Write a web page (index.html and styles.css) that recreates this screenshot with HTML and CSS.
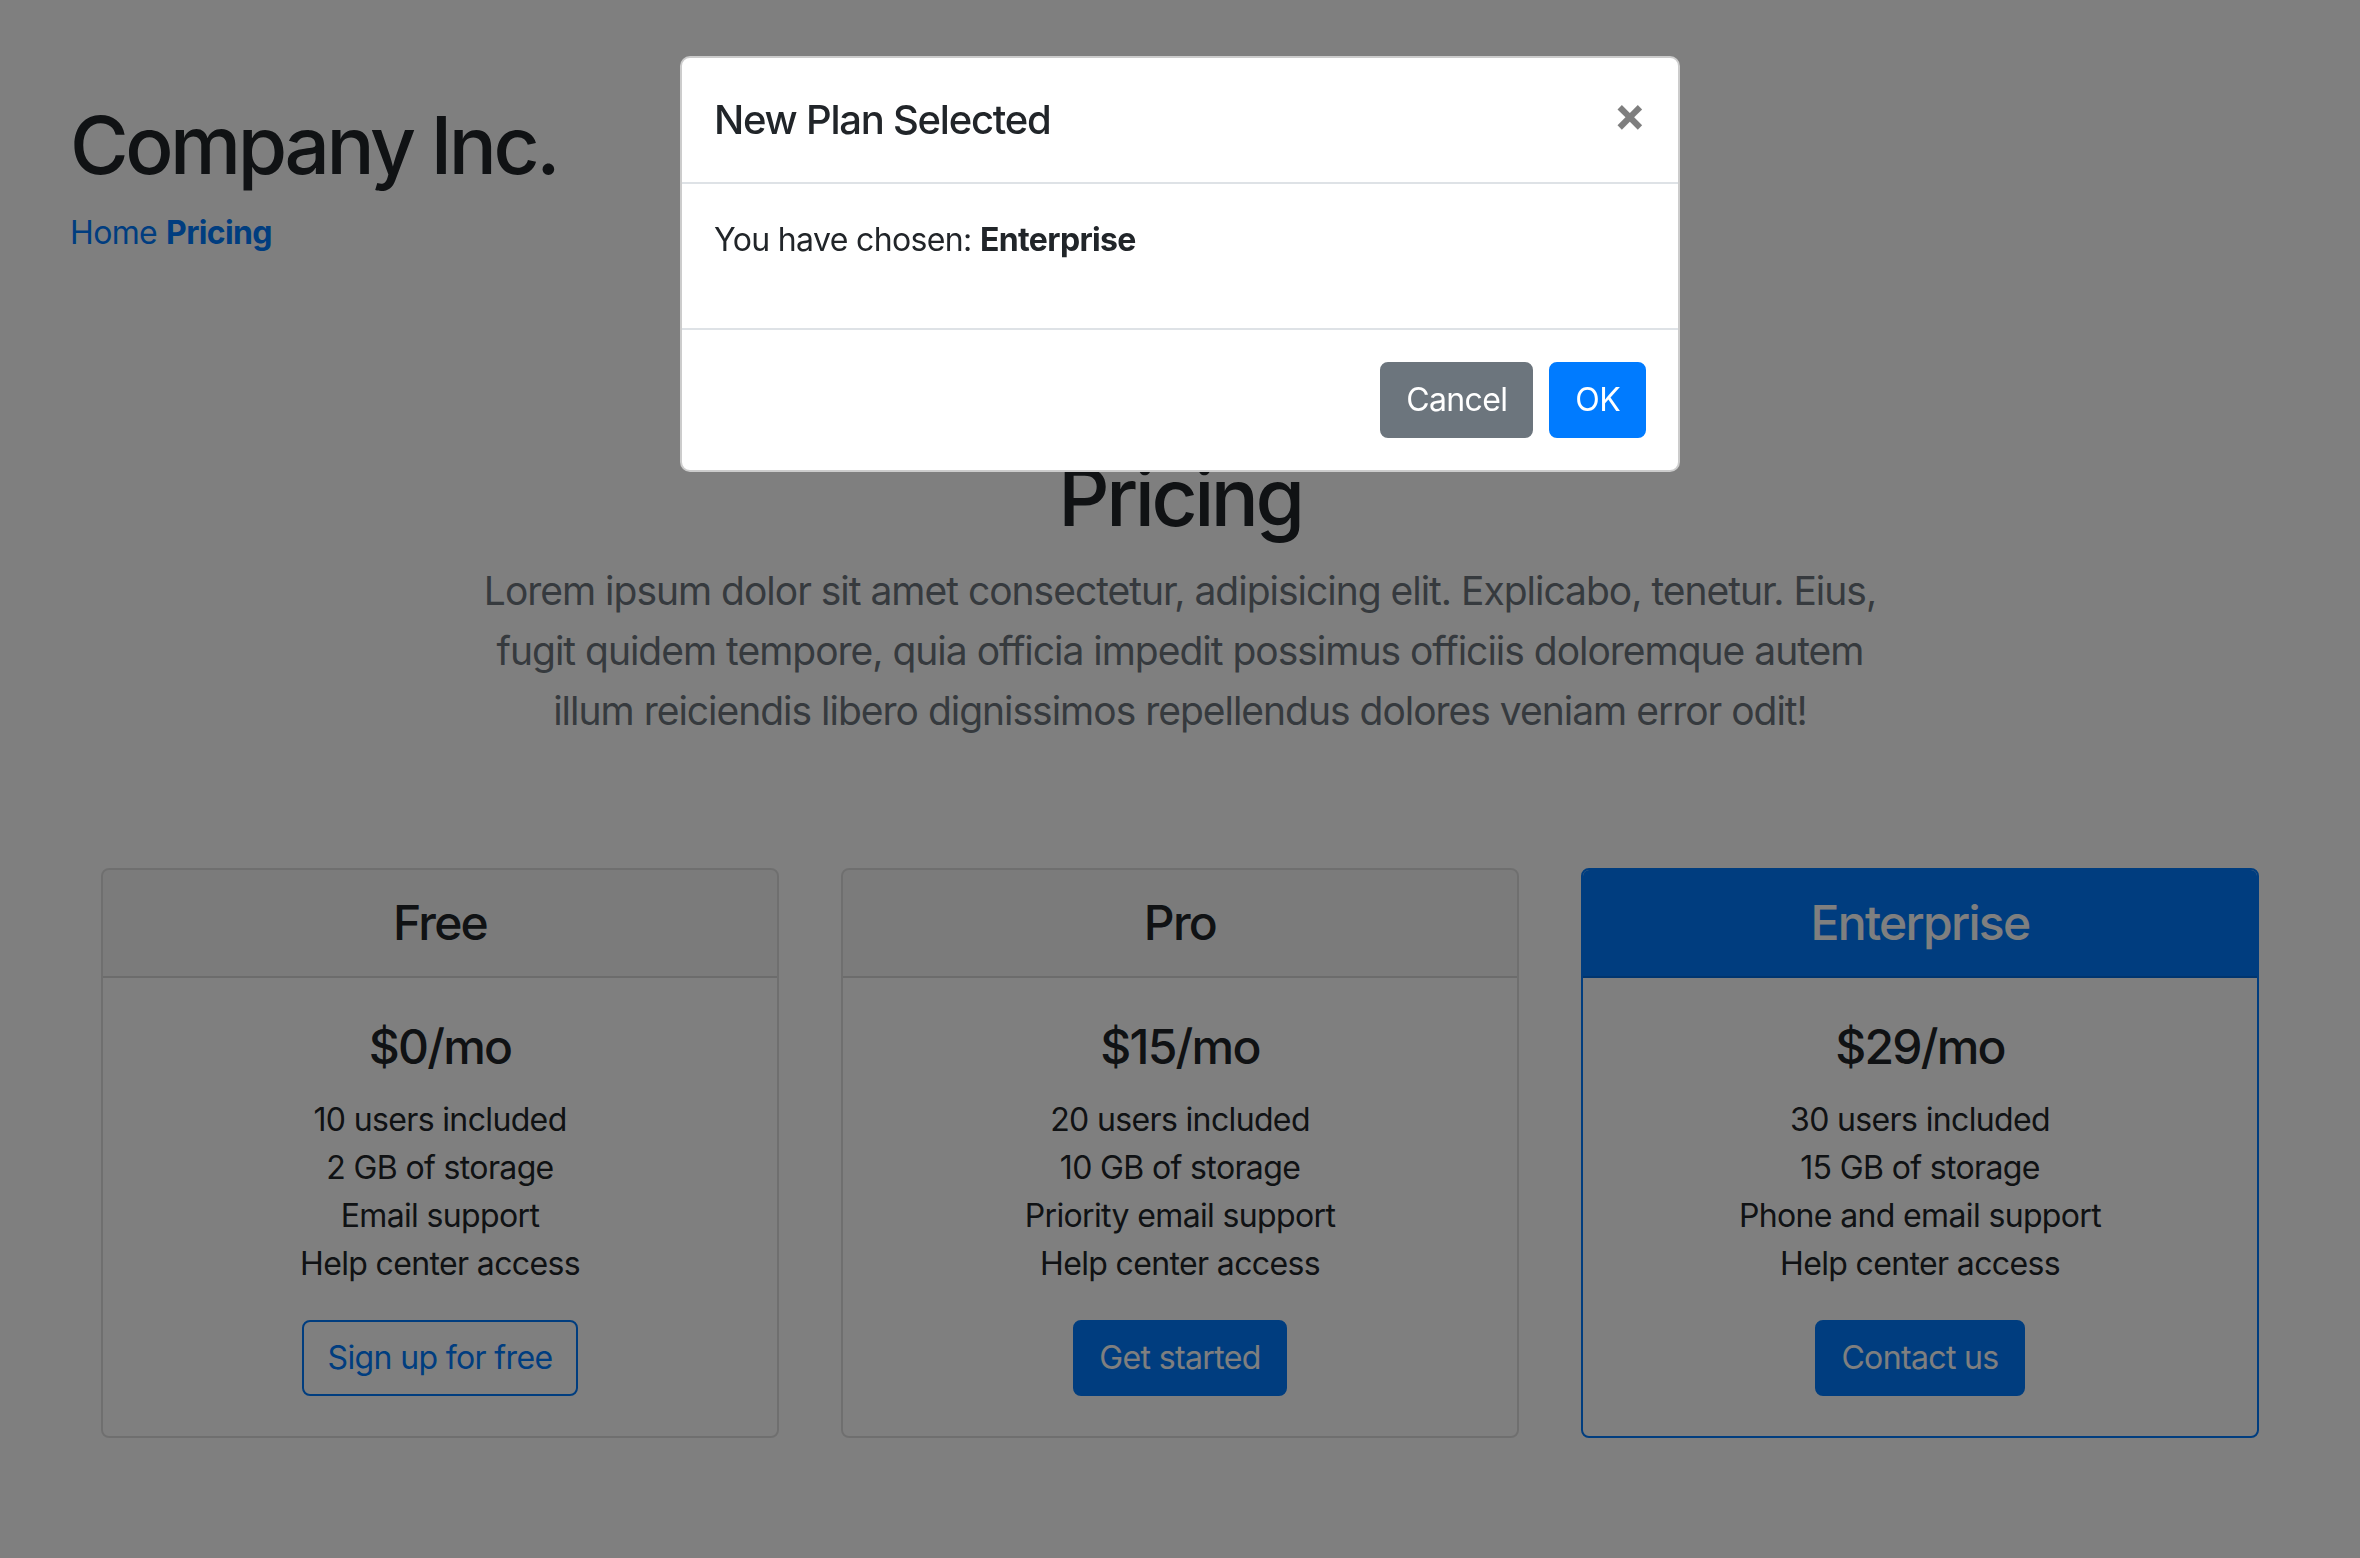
FILE: index.html
```html
<!DOCTYPE html>
<html lang="en">
<head>
<meta charset="utf-8">
<title>Pricing - Company Inc.</title>
<link rel="stylesheet" href="styles.css">
</head>
<body>
  <header class="site-header">
    <h1 class="brand">Company Inc.</h1>
    <nav class="site-nav">
      <a class="nav-link" href="#">Home</a>
      <a class="nav-link active" href="#">Pricing</a>
    </nav>
  </header>

  <section class="pricing-header">
    <h1 class="pricing-title">Pricing</h1>
    <p class="lead">Lorem ipsum dolor sit amet consectetur, adipisicing elit. Explicabo, tenetur. Eius, fugit quidem tempore, quia officia impedit possimus officiis doloremque autem illum reiciendis libero dignissimos repellendus dolores veniam error odit!</p>
  </section>

  <div class="card-deck">
    <div class="card">
      <div class="card-header"><h4 class="card-name">Free</h4></div>
      <div class="card-body">
        <h2 class="card-price">$0/mo</h2>
        <ul class="features">
          <li>10 users included</li>
          <li>2 GB of storage</li>
          <li>Email support</li>
          <li>Help center access</li>
        </ul>
        <button class="btn btn-outline-primary">Sign up for free</button>
      </div>
    </div>
    <div class="card">
      <div class="card-header"><h4 class="card-name">Pro</h4></div>
      <div class="card-body">
        <h2 class="card-price">$15/mo</h2>
        <ul class="features">
          <li>20 users included</li>
          <li>10 GB of storage</li>
          <li>Priority email support</li>
          <li>Help center access</li>
        </ul>
        <button class="btn btn-primary">Get started</button>
      </div>
    </div>
    <div class="card card-selected">
      <div class="card-header"><h4 class="card-name">Enterprise</h4></div>
      <div class="card-body">
        <h2 class="card-price">$29/mo</h2>
        <ul class="features">
          <li>30 users included</li>
          <li>15 GB of storage</li>
          <li>Phone and email support</li>
          <li>Help center access</li>
        </ul>
        <button class="btn btn-primary">Contact us</button>
      </div>
    </div>
  </div>

  <div class="modal-backdrop"></div>
  <div class="modal">
    <div class="modal-dialog">
      <div class="modal-content">
        <div class="modal-header">
          <h5 class="modal-title">New Plan Selected</h5>
          <button class="close" aria-label="Close">&times;</button>
        </div>
        <div class="modal-body">
          <p>You have chosen: <strong>Enterprise</strong></p>
        </div>
        <div class="modal-footer">
          <button class="btn btn-secondary">Cancel</button>
          <button class="btn btn-primary">OK</button>
        </div>
      </div>
    </div>
  </div>
</body>
</html>
```
FILE: styles.css
```css
* { box-sizing: border-box; }

html, body {
  margin: 0;
  padding: 0;
}

body {
  background: #fff;
  color: #212529;
  font-family: "Inter", "Roboto", "Liberation Sans", sans-serif;
  font-size: 32px;
  line-height: 1.5;
  letter-spacing: -0.02em;
  padding-top: 97px;
}

h1, h2, h4, h5 { margin: 0; font-weight: 500; }

.site-header {
  padding-left: 70px;
}

.brand {
  font-size: 80px;
  line-height: 96px;
  letter-spacing: -0.043em;
  margin-bottom: 16px;
}

.site-nav {
  display: flex;
  gap: 9px;
  line-height: 48px;
}

.nav-link {
  color: #007bff;
  text-decoration: none;
}

.nav-link.active { font-weight: 700; }

.pricing-header {
  max-width: 1400px;
  margin: 192px auto 0;
  text-align: center;
}

.pricing-title {
  font-size: 80px;
  line-height: 96px;
  letter-spacing: -0.043em;
  margin-bottom: 16px;
}

.lead {
  margin: 0;
  font-size: 39px;
  line-height: 60px;
  letter-spacing: -0.026em;
  color: #6c757d;
}

.card-deck {
  width: 2158px;
  margin: 127px auto 0;
  display: flex;
  gap: 62px;
}

.card {
  flex: 1 1 0;
  border: 2px solid rgba(0, 0, 0, .125);
  border-radius: 8px;
  text-align: center;
  overflow: hidden;
}

.card-header {
  padding: 24px 40px;
  background: rgba(0, 0, 0, .03);
  border-bottom: 2px solid rgba(0, 0, 0, .125);
}

.card-name {
  font-size: 48px;
  line-height: 57.6px;
  letter-spacing: -0.036em;
}

.card-body {
  padding: 40px;
}

.card-price {
  font-size: 48px;
  line-height: 57.6px;
  letter-spacing: -0.037em;
  margin-bottom: 21px;
}

.features {
  list-style: none;
  margin: 0 0 32px;
  padding: 0;
}

.card-selected {
  border-color: #007bff;
}

.card-selected .card-header {
  background: #007bff;
  color: #fff;
}

.btn {
  display: inline-block;
  font-family: inherit;
  font-size: 32px;
  line-height: 48px;
  letter-spacing: -0.02em;
  padding: 12px 24px;
  border: 2px solid transparent;
  border-radius: 8px;
  cursor: pointer;
  font-weight: 400;
}

.btn-outline-primary {
  color: #007bff;
  border-color: #007bff;
  background: transparent;
}

.btn-primary {
  color: #fff;
  background: #007bff;
  border-color: #007bff;
}

.btn-secondary {
  color: #fff;
  background: #6c757d;
  border-color: #6c757d;
}

.modal-backdrop {
  position: fixed;
  inset: 0;
  background: #000;
  opacity: .5;
  z-index: 10;
}

.modal {
  position: fixed;
  inset: 0;
  z-index: 20;
}

.modal-dialog {
  width: 1000px;
  margin: 56px auto;
}

.modal-content {
  background: #fff;
  border: 2px solid rgba(0, 0, 0, .2);
  border-radius: 10px;
}

.modal-header {
  display: flex;
  align-items: flex-start;
  justify-content: space-between;
  padding: 32px;
  border-bottom: 2px solid #dee2e6;
}

.modal-title {
  font-size: 40px;
  line-height: 60px;
  letter-spacing: -0.031em;
}

.close {
  padding: 32px;
  margin: -32px -32px -32px auto;
  background: transparent;
  border: 0;
  font-family: inherit;
  font-size: 48px;
  font-weight: 700;
  line-height: 1;
  color: #000;
  opacity: .5;
  text-shadow: 0 2px 0 #fff;
  cursor: pointer;
}

.modal-body {
  padding: 32px;
}

.modal-body p {
  margin: 0 0 32px;
}

.modal-footer {
  display: flex;
  justify-content: flex-end;
  align-items: center;
  padding: 24px;
  border-top: 2px solid #dee2e6;
}

.modal-footer .btn {
  margin: 8px;
}
```
